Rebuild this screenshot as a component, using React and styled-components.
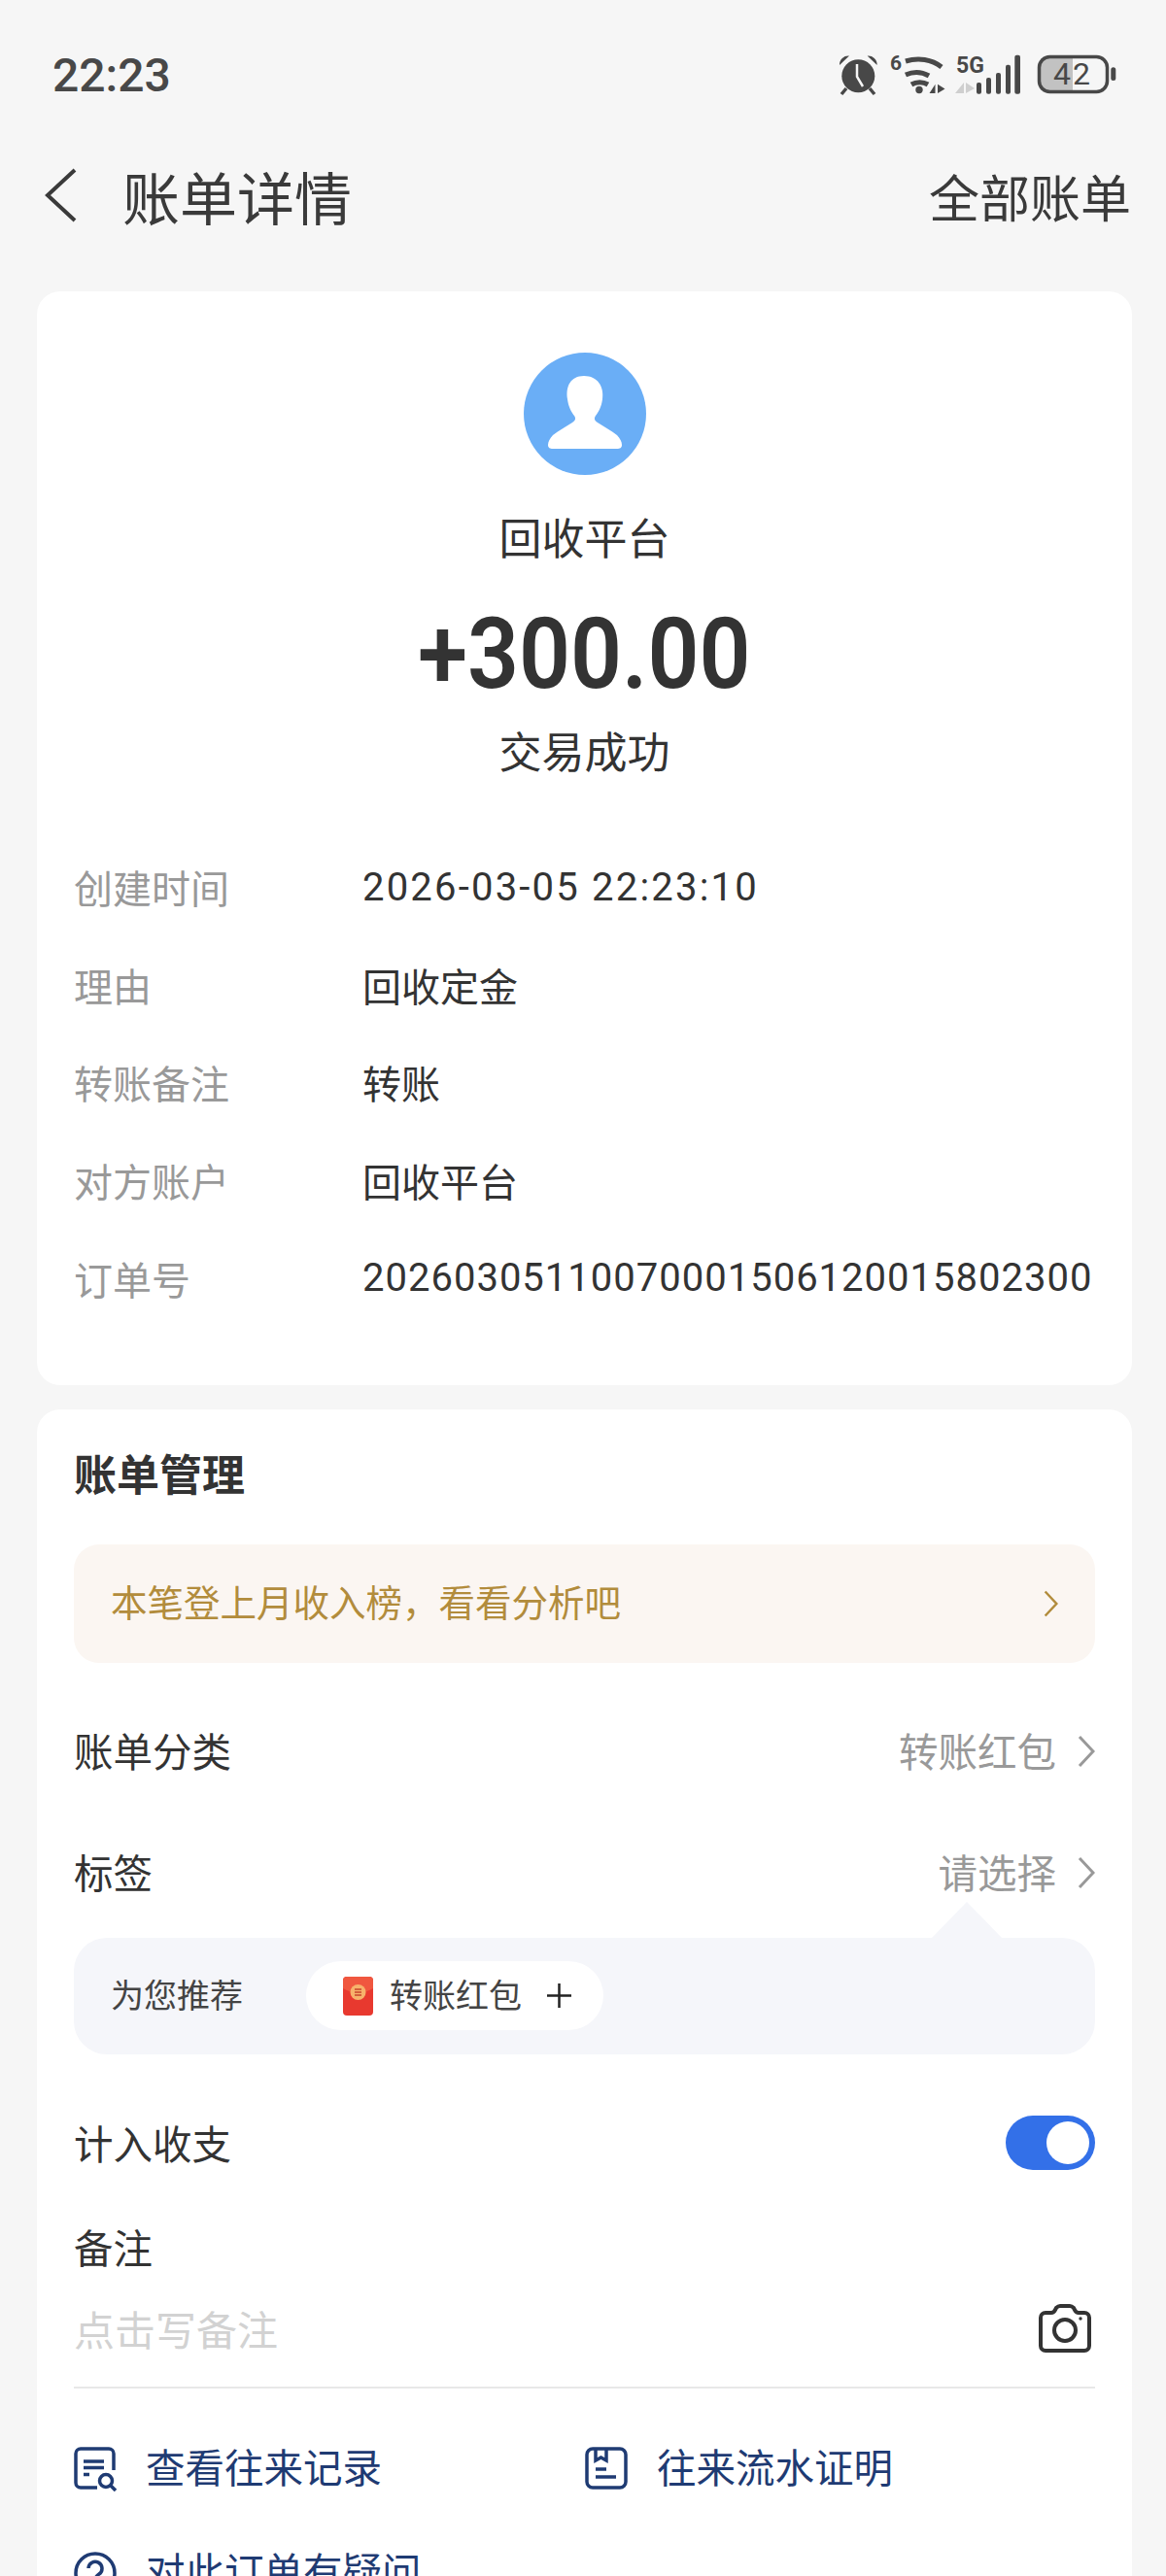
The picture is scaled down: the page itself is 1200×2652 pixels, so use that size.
import React from 'react';
import styled, { createGlobalStyle } from 'styled-components';

const FONT = `Roboto, "Noto Sans CJK SC", sans-serif`;

const GlobalStyle = createGlobalStyle`
	html, body {
		margin: 0;
		padding: 0;
		background: #f6f6f6;
	}
	* {
		box-sizing: border-box;
	}
`;

const S = {
	Page: styled.div`
		width: 1200px;
		height: 2652px;
		overflow: hidden;
		background: #f6f6f6;
		font-family: ${FONT};
		color: #333;
	`,
	StatusBar: styled.div`
		height: 154px;
		padding: 0 51px 0 54px;
		display: flex;
		align-items: center;
		justify-content: space-between;
	`,
	Time: styled.span`
		font-size: 48px;
		font-weight: 500;
		color: #484848;
	`,
	NavBar: styled.div`
		height: 94px;
		margin-bottom: 52px;
		padding: 0 36px 0 44px;
		display: flex;
		align-items: center;
		justify-content: space-between;
	`,
	NavLeft: styled.div`
		display: flex;
		align-items: center;
		gap: 46px;
	`,
	NavTitle: styled.span`
		font-size: 59px;
		color: #3a3a3a;
	`,
	NavAction: styled.span`
		font-size: 52px;
		color: #3a3a3a;
	`,
	Card: styled.section`
		margin: 0 35px 0 38px;
		background: #fff;
		border-radius: 24px;
		padding: ${(props) => props.$padding};
		& + & {
			margin-top: 25px;
		}
	`,
	Summary: styled.div`
		display: flex;
		flex-direction: column;
		align-items: center;
		margin-bottom: 52px;
	`,
	Avatar: styled.div`
		width: 126px;
		height: 126px;
		margin-bottom: 29px;
		svg {
			display: block;
		}
	`,
	Party: styled.div`
		font-size: 44px;
		line-height: 76px;
		color: #333;
	`,
	Amount: styled.div`
		font-size: 102px;
		font-weight: 600;
		line-height: 116px;
		color: #333;
		margin-top: 21px;
		transform: scaleX(0.91);
	`,
	Status: styled.div`
		font-size: 44px;
		line-height: 70px;
		color: #333;
		margin-top: 10px;
	`,
	Detail: styled.div`
		display: flex;
		align-items: center;
		height: 100.6px;
		font-size: 40px;
	`,
	DetailLabel: styled.span`
		width: 297px;
		color: #999;
	`,
	DetailValue: styled.span`
		color: #333;
		letter-spacing: ${(props) => props.$spacing || '0'};
	`,
	SectionTitle: styled.h2`
		margin: 0 0 40px;
		font-size: 44px;
		line-height: 60px;
		font-weight: 700;
		color: #333;
	`,
	Banner: styled.div`
		height: 122px;
		margin-bottom: 30px;
		padding: 0 38px;
		border-radius: 26px;
		background: #fbf6f2;
		display: flex;
		align-items: center;
		justify-content: space-between;
		font-size: 37.5px;
		color: #b28c3c;
	`,
	BannerText: styled.span`
		margin-bottom: 6px;
	`,
	Row: styled.div`
		height: ${(props) => props.$height}px;
		display: flex;
		align-items: center;
		justify-content: space-between;
		font-size: 40.5px;
		color: #333;
	`,
	RowValue: styled.div`
		display: flex;
		align-items: center;
		gap: 22px;
		color: #999;
		svg {
			margin-top: 3px;
		}
	`,
	Recommend: styled.div`
		position: relative;
		height: 120px;
		margin: 3px 0 9px;
		padding: 0 38px;
		border-radius: 34px;
		background: #f5f6fa;
		display: flex;
		align-items: center;
		gap: 65px;
		font-size: 34px;
		color: #444;
		&::before {
			content: '';
			position: absolute;
			top: -37px;
			right: 96px;
			width: 72px;
			height: 37px;
			background: #f5f6fa;
			clip-path: polygon(50% 0, 100% 100%, 0 100%);
		}
	`,
	RecommendLabel: styled.span`
		margin-bottom: 4px;
	`,
	Chip: styled.div`
		height: 71px;
		padding: 0 33px 0 38px;
		border-radius: 36px;
		background: #fff;
		display: flex;
		align-items: center;
		svg {
			display: block;
		}
	`,
	ChipLabel: styled.span`
		margin: 0 26px 4px 17px;
	`,
	Toggle: styled.div`
		width: 92px;
		height: 56px;
		border-radius: 28px;
		background: #3370e8;
		padding: 6px;
		display: flex;
		justify-content: flex-end;
		&::after {
			content: '';
			width: 44px;
			height: 44px;
			border-radius: 50%;
			background: #fff;
		}
	`,
	NoteLabel: styled.div`
		font-size: 40.5px;
		line-height: 56px;
		color: #333;
	`,
	NoteInput: styled.div`
		height: 115px;
		padding: 0 4px 7px 0;
		display: flex;
		align-items: center;
		justify-content: space-between;
		border-bottom: 2px solid #e8e8e8;
		font-size: 42px;
		color: #d2d2d2;
	`,
	Links: styled.div`
		display: grid;
		grid-template-columns: 526px 1fr;
		row-gap: 57px;
		margin-top: 58px;
	`,
	LinkItem: styled.div`
		display: flex;
		align-items: center;
		gap: 28px;
		font-size: 40.5px;
		line-height: 50px;
		color: #1f3b73;
		svg {
			display: block;
		}
	`,
};

const DETAILS = [
	{ label: '创建时间', value: '2026-03-05 22:23:10', spacing: '2.2px' },
	{ label: '理由', value: '回收定金' },
	{ label: '转账备注', value: '转账' },
	{ label: '对方账户', value: '回收平台' },
	{ label: '订单号', value: '20260305110070001506120015802300', spacing: '1px' },
];

const Chevron = ({ color = '#999', height = 36 }) => (
	<svg width={height / 2} height={height} viewBox="0 0 18 36" fill="none">
		<path d="M2 3l14 15L2 33" stroke={color} strokeWidth="3" />
	</svg>
);

const StatusIcons = () => (
	<svg width="286" height="50" viewBox="0 -4 286 50" fill="#484848">
		{/* alarm */}
		<circle cx="20.3" cy="22.3" r="17" />
		<path d="M1 11 A9 9 0 0 1 11 1.5 Z M39.6 11 A9 9 0 0 0 29.6 1.5 Z" />
		<path d="M8 35l-5 6M32 35l5 6" stroke="#484848" strokeWidth="3.5" />
		<path d="M19 10v13l6 10" stroke="#f6f6f6" strokeWidth="2.5" fill="none" />
		{/* wifi */}
		<text x="53" y="16" fontSize="21" fontWeight="700" fontFamily="Roboto, sans-serif">6</text>
		<g fill="none" stroke="#484848" strokeWidth="5">
			<path d="M69 7c13-4 27-2 37 6" />
			<path d="M69 21c9-4 17-3 24 1" />
			<path d="M75 31c5-3 12-3 17 0" />
		</g>
		<circle cx="83" cy="36.5" r="3.7" />
		<path d="M99.5 40V30.7l-6 9.3zM102 40V30.7l7.5 4.7z" />
		{/* 5G + signal */}
		<text x="121" y="19" fontSize="23" fontWeight="700" fontFamily="Roboto, sans-serif">5G</text>
		<path d="M129 40V29l-9 11zM131 40V29l9 6z" fill="#cfcfcf" />
		<rect x="142" y="29" width="5" height="11.7" rx="2" />
		<rect x="152" y="24" width="5" height="16.7" rx="2" />
		<rect x="162" y="19" width="5" height="21.7" rx="2" />
		<rect x="172" y="10.7" width="5" height="30" rx="2" />
		<rect x="181.3" y="0.7" width="5.7" height="40" rx="2" />
		{/* battery */}
		<path d="M208 4h33v33h-33z" fill="#c2c2c2" stroke="none" />
		<rect x="206.5" y="2.5" width="70" height="36" rx="11" fill="none" stroke="#484848" strokeWidth="3.5" />
		<rect x="280.3" y="13.3" width="5" height="13.7" rx="2.5" />
		<text x="241" y="31" fontSize="32" letterSpacing="2" fontFamily="Roboto, sans-serif" textAnchor="middle">42</text>
	</svg>
);

const AvatarIcon = () => (
	<svg width="126" height="126" viewBox="0 0 126 126">
		<circle cx="63" cy="63" r="63" fill="#6aaef6" />
		<path
			d="M62 24c-14 0-19 11-17 24 1 8 4 13 7 17 2 3 1 5-2 7-6 4-14 8-20 13-3 3-5 7-5 10 0 3 2 4 5 4h66c3 0 5-1 5-4 0-3-2-7-5-10-6-5-14-9-20-13-3-2-4-4-2-7 3-4 6-9 7-17 2-13-5-24-19-24z"
			fill="#fff"
		/>
	</svg>
);

const RedPacket = () => (
	<svg width="31" height="40" viewBox="0 0 31 40">
		<rect width="31" height="40" rx="4" fill="#e8392f" />
		<path d="M0 4a4 4 0 0 1 4-4h23a4 4 0 0 1 4 4v8q-15.500 9-31 0z" fill="#f0573f" />
		<circle cx="15.500" cy="16" r="8" fill="#f7b26b" />
		<path d="M12 13h7M12 16h7M12 19h7" stroke="#c9432c" strokeWidth="1.4" />
	</svg>
);

const PlusIcon = () => (
	<svg width="25" height="25" viewBox="0 0 25 25">
		<path d="M0 12.500h25M12.500 0v25" stroke="#222" strokeWidth="2.5" />
	</svg>
);

const CameraIcon = () => (
	<svg width="54" height="50" viewBox="0 0 54 50" fill="none" stroke="#333" strokeWidth="4">
		<path d="M7 9h6c2 0 3-1 4-3l1-2c1-1 2-2 4-2h10c2 0 3 1 4 2l1 2c1 2 2 3 4 3h6a5 5 0 0 1 5 5v29a5 5 0 0 1-5 5H7a5 5 0 0 1-5-5V14a5 5 0 0 1 5-5z" />
		<circle cx="27" cy="27" r="11" />
		<circle cx="43" cy="15" r="1.700" fill="#333" stroke="none" />
	</svg>
);

const RecordIcon = () => (
	<svg width="46" height="46" viewBox="0 0 46 46" fill="none" stroke="#1f3b73" strokeWidth="3.5">
		<path d="M41 24V7a5 5 0 0 0-5-5H7a5 5 0 0 0-5 5v30a5 5 0 0 0 5 5h17" />
		<path d="M10 15h21M10 21.500h21M10 28.500h6" />
		<circle cx="33" cy="35" r="6.500" />
		<path d="M38 40l5 5" />
	</svg>
);

const ProofIcon = () => (
	<svg width="46" height="46" viewBox="0 0 46 46" fill="none" stroke="#1f3b73" strokeWidth="3.5">
		<rect x="2" y="2" width="40" height="40" rx="6" />
		<path d="M11 3v11l5.500-3 5.500 3V3" />
		<path d="M11 23h11M11 31h21" />
	</svg>
);

const HelpIcon = () => (
	<svg width="46" height="44" viewBox="0 0 46 44" fill="none" stroke="#1f3b73" strokeWidth="3.5">
		<circle cx="22" cy="22" r="20" />
		<path d="M15 17a7 7 0 1 1 11 6c-3 2-4 3-4 6" />
		<path d="M22 33v4" />
	</svg>
);

const App = () => (
	<S.Page>
		<GlobalStyle />
		<S.StatusBar>
			<S.Time>22:23</S.Time>
			<StatusIcons />
		</S.StatusBar>
		<S.NavBar>
			<S.NavLeft>
				<svg width="36" height="58" viewBox="0 0 36 58" fill="none">
					<path d="M33 3L5 29l28 26" stroke="#3a3a3a" strokeWidth="4" />
				</svg>
				<S.NavTitle>账单详情</S.NavTitle>
			</S.NavLeft>
			<S.NavAction>全部账单</S.NavAction>
		</S.NavBar>
		<S.Card $padding="63px 38px 60px">
			<S.Summary>
				<S.Avatar>
					<AvatarIcon />
				</S.Avatar>
				<S.Party>回收平台</S.Party>
				<S.Amount>+300.00</S.Amount>
				<S.Status>交易成功</S.Status>
			</S.Summary>
			{DETAILS.map((item) => (
				<S.Detail key={item.label}>
					<S.DetailLabel>{item.label}</S.DetailLabel>
					<S.DetailValue $spacing={item.spacing}>{item.value}</S.DetailValue>
				</S.Detail>
			))}
		</S.Card>
		<S.Card $padding="39px 38px 0">
			<S.SectionTitle>账单管理</S.SectionTitle>
			<S.Banner>
				<S.BannerText>本笔登上月收入榜，看看分析吧</S.BannerText>
				<Chevron color="#b28c3c" height={30} />
			</S.Banner>
			<S.Row $height={120}>
				账单分类
				<S.RowValue>
					转账红包
					<Chevron />
				</S.RowValue>
			</S.Row>
			<S.Row $height={130}>
				标签
				<S.RowValue>
					请选择
					<Chevron />
				</S.RowValue>
			</S.Row>
			<S.Recommend>
				<S.RecommendLabel>为您推荐</S.RecommendLabel>
				<S.Chip>
					<RedPacket />
					<S.ChipLabel>转账红包</S.ChipLabel>
					<PlusIcon />
				</S.Chip>
			</S.Recommend>
			<S.Row $height={164}>
				计入收支
				<S.Toggle />
			</S.Row>
			<S.NoteLabel>备注</S.NoteLabel>
			<S.NoteInput>
				点击写备注
				<CameraIcon />
			</S.NoteInput>
			<S.Links>
				<S.LinkItem>
					<RecordIcon />
					查看往来记录
				</S.LinkItem>
				<S.LinkItem>
					<ProofIcon />
					往来流水证明
				</S.LinkItem>
				<S.LinkItem>
					<HelpIcon />
					对此订单有疑问
				</S.LinkItem>
			</S.Links>
		</S.Card>
	</S.Page>
);

export default App;
